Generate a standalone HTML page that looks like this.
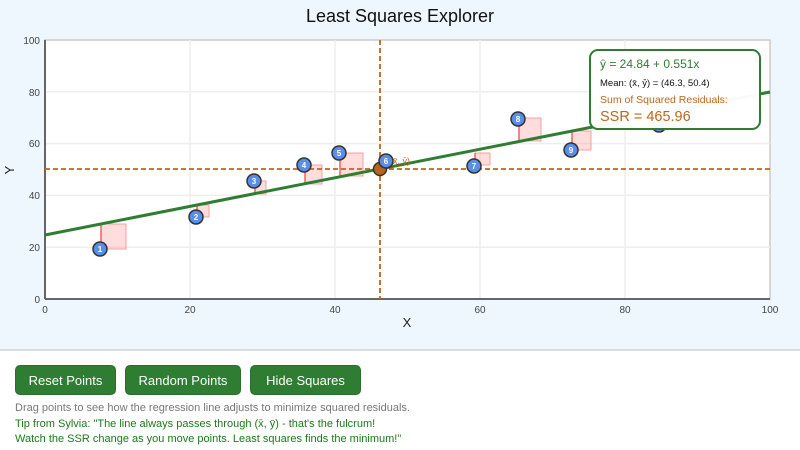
<!DOCTYPE html>
<html><head><meta charset="utf-8"><style>
body{margin:0;width:800px;height:450px;overflow:hidden;font-family:"Liberation Sans",Arial,sans-serif;background:#fff}
.top{position:absolute;left:0;top:0;width:800px;height:349px;background:#eef6fe;border-bottom:2px solid #d8dde2}
.btn{position:absolute;top:365px;height:30px;background:#2e7d32;color:#fff;border-radius:5px;font-size:13px;line-height:30px;text-align:center;border:1px solid #2a6e2d;box-sizing:border-box;font-weight:500}
.t{position:absolute;left:15px;font-size:11px}
</style></head><body>
<div class="top"></div>
<svg width="800" height="350" style="position:absolute;left:0;top:0" font-family="Liberation Sans, Arial, sans-serif">
<text x="400" y="22" font-size="18" text-anchor="middle" fill="#111">Least Squares Explorer</text>
<rect x="45" y="40" width="725" height="259" fill="#fff" stroke="#ccc" stroke-width="1.5"/>
<g stroke="#eee" stroke-width="1.5">
<line x1="190" y1="40" x2="190" y2="299"/><line x1="335" y1="40" x2="335" y2="299"/><line x1="480" y1="40" x2="480" y2="299"/><line x1="625" y1="40" x2="625" y2="299"/>
<line x1="45" y1="247.2" x2="770" y2="247.2"/><line x1="45" y1="195.4" x2="770" y2="195.4"/><line x1="45" y1="143.6" x2="770" y2="143.6"/><line x1="45" y1="91.8" x2="770" y2="91.8"/>
</g>
<line x1="45" y1="40" x2="45" y2="299" stroke="#666" stroke-width="2"/>
<line x1="45" y1="299" x2="770" y2="299" stroke="#666" stroke-width="2"/>
<g font-size="10" fill="#444" text-anchor="end">
<text x="40" y="44">100</text><text x="40" y="96">80</text><text x="40" y="147">60</text><text x="40" y="199">40</text><text x="40" y="251">20</text><text x="40" y="303">0</text></g>
<g font-size="10" fill="#444" text-anchor="middle">
<text x="45" y="313">0</text><text x="190" y="313">20</text><text x="335" y="313">40</text><text x="480" y="313">60</text><text x="625" y="313">80</text><text x="770" y="313">100</text></g>
<text x="407" y="327" font-size="13" text-anchor="middle" fill="#222">X</text>
<text x="14" y="170" font-size="13" text-anchor="middle" fill="#222" transform="rotate(-90 14 170)">Y</text>
<g fill="rgba(255,120,120,0.25)" stroke="#f5a0a0" stroke-width="1">
<rect x="101" y="224" width="25" height="25"/><rect x="197" y="205" width="12" height="12"/><rect x="255" y="181" width="11" height="13"/><rect x="305" y="165" width="17" height="19"/><rect x="340" y="153" width="23" height="23"/><rect x="475" y="153" width="15" height="12"/><rect x="519" y="118" width="22" height="23"/><rect x="572" y="131" width="19" height="19"/>
</g>
<g stroke="#f06060" stroke-width="1.5">
<line x1="101" y1="224" x2="101" y2="249"/><line x1="197" y1="205" x2="197" y2="217"/><line x1="255" y1="181" x2="255" y2="194"/><line x1="305" y1="165" x2="305" y2="184"/><line x1="340" y1="153" x2="340" y2="176"/><line x1="475" y1="153" x2="475" y2="165"/><line x1="519" y1="118" x2="519" y2="141"/><line x1="572" y1="131" x2="572" y2="150"/>
</g>
<g stroke="#c0651a" stroke-width="1.8" stroke-dasharray="5,3">
<line x1="380" y1="40" x2="380" y2="299"/><line x1="45" y1="169" x2="770" y2="169"/></g>
<line x1="45" y1="235" x2="770" y2="92" stroke="#2e7d32" stroke-width="3"/>
<circle cx="380" cy="169" r="6.5" fill="#b5651d" stroke="#333" stroke-width="1.5"/>
<text x="390" y="164" font-size="9" fill="#c0651a">(x̄, ȳ)</text>
<g stroke="#333" stroke-width="1.5" fill="#5a8ee8">
<circle cx="100" cy="249" r="7"/><circle cx="196" cy="217" r="7"/><circle cx="254" cy="181" r="7"/><circle cx="304" cy="165" r="7"/><circle cx="339" cy="153" r="7"/><circle cx="386" cy="161" r="7"/><circle cx="474" cy="166" r="7"/><circle cx="518" cy="119" r="7"/><circle cx="571" cy="150" r="7"/><circle cx="659" cy="125" r="7"/></g>
<g font-size="8" fill="#fff" text-anchor="middle" font-weight="bold">
<text x="100" y="252">1</text><text x="196" y="220">2</text><text x="254" y="184">3</text><text x="304" y="168">4</text><text x="339" y="156">5</text><text x="386" y="164">6</text><text x="474" y="169">7</text><text x="518" y="122">8</text><text x="571" y="153">9</text></g>
<rect x="590" y="50" width="170" height="79" rx="8" fill="rgba(255,255,255,0.97)" stroke="#2e7d32" stroke-width="2"/>
<text x="600" y="68" font-size="12" fill="#2e7d32">ŷ = 24.84 + 0.551x</text>
<text x="600" y="86" font-size="9.5" fill="#111">Mean: (x̄, ȳ) = (46.3, 50.4)</text>
<text x="600" y="103" font-size="10.5" fill="#c0651a">Sum of Squared Residuals:</text>
<text x="600" y="121" font-size="14.5" fill="#c0651a">SSR = 465.96</text>
</svg>
<div class="btn" style="left:15px;width:101px">Reset Points</div>
<div class="btn" style="left:125px;width:116px">Random Points</div>
<div class="btn" style="left:250px;width:111px">Hide Squares</div>
<div class="t" style="top:402px;color:#777">Drag points to see how the regression line adjusts to minimize squared residuals.</div>
<div class="t" style="top:418px;color:#1b7a1b">Tip from Sylvia: "The line always passes through (x̄, ȳ) - that's the fulcrum!</div>
<div class="t" style="top:433px;color:#1b7a1b">Watch the SSR change as you move points. Least squares finds the minimum!"</div>
</body></html>
